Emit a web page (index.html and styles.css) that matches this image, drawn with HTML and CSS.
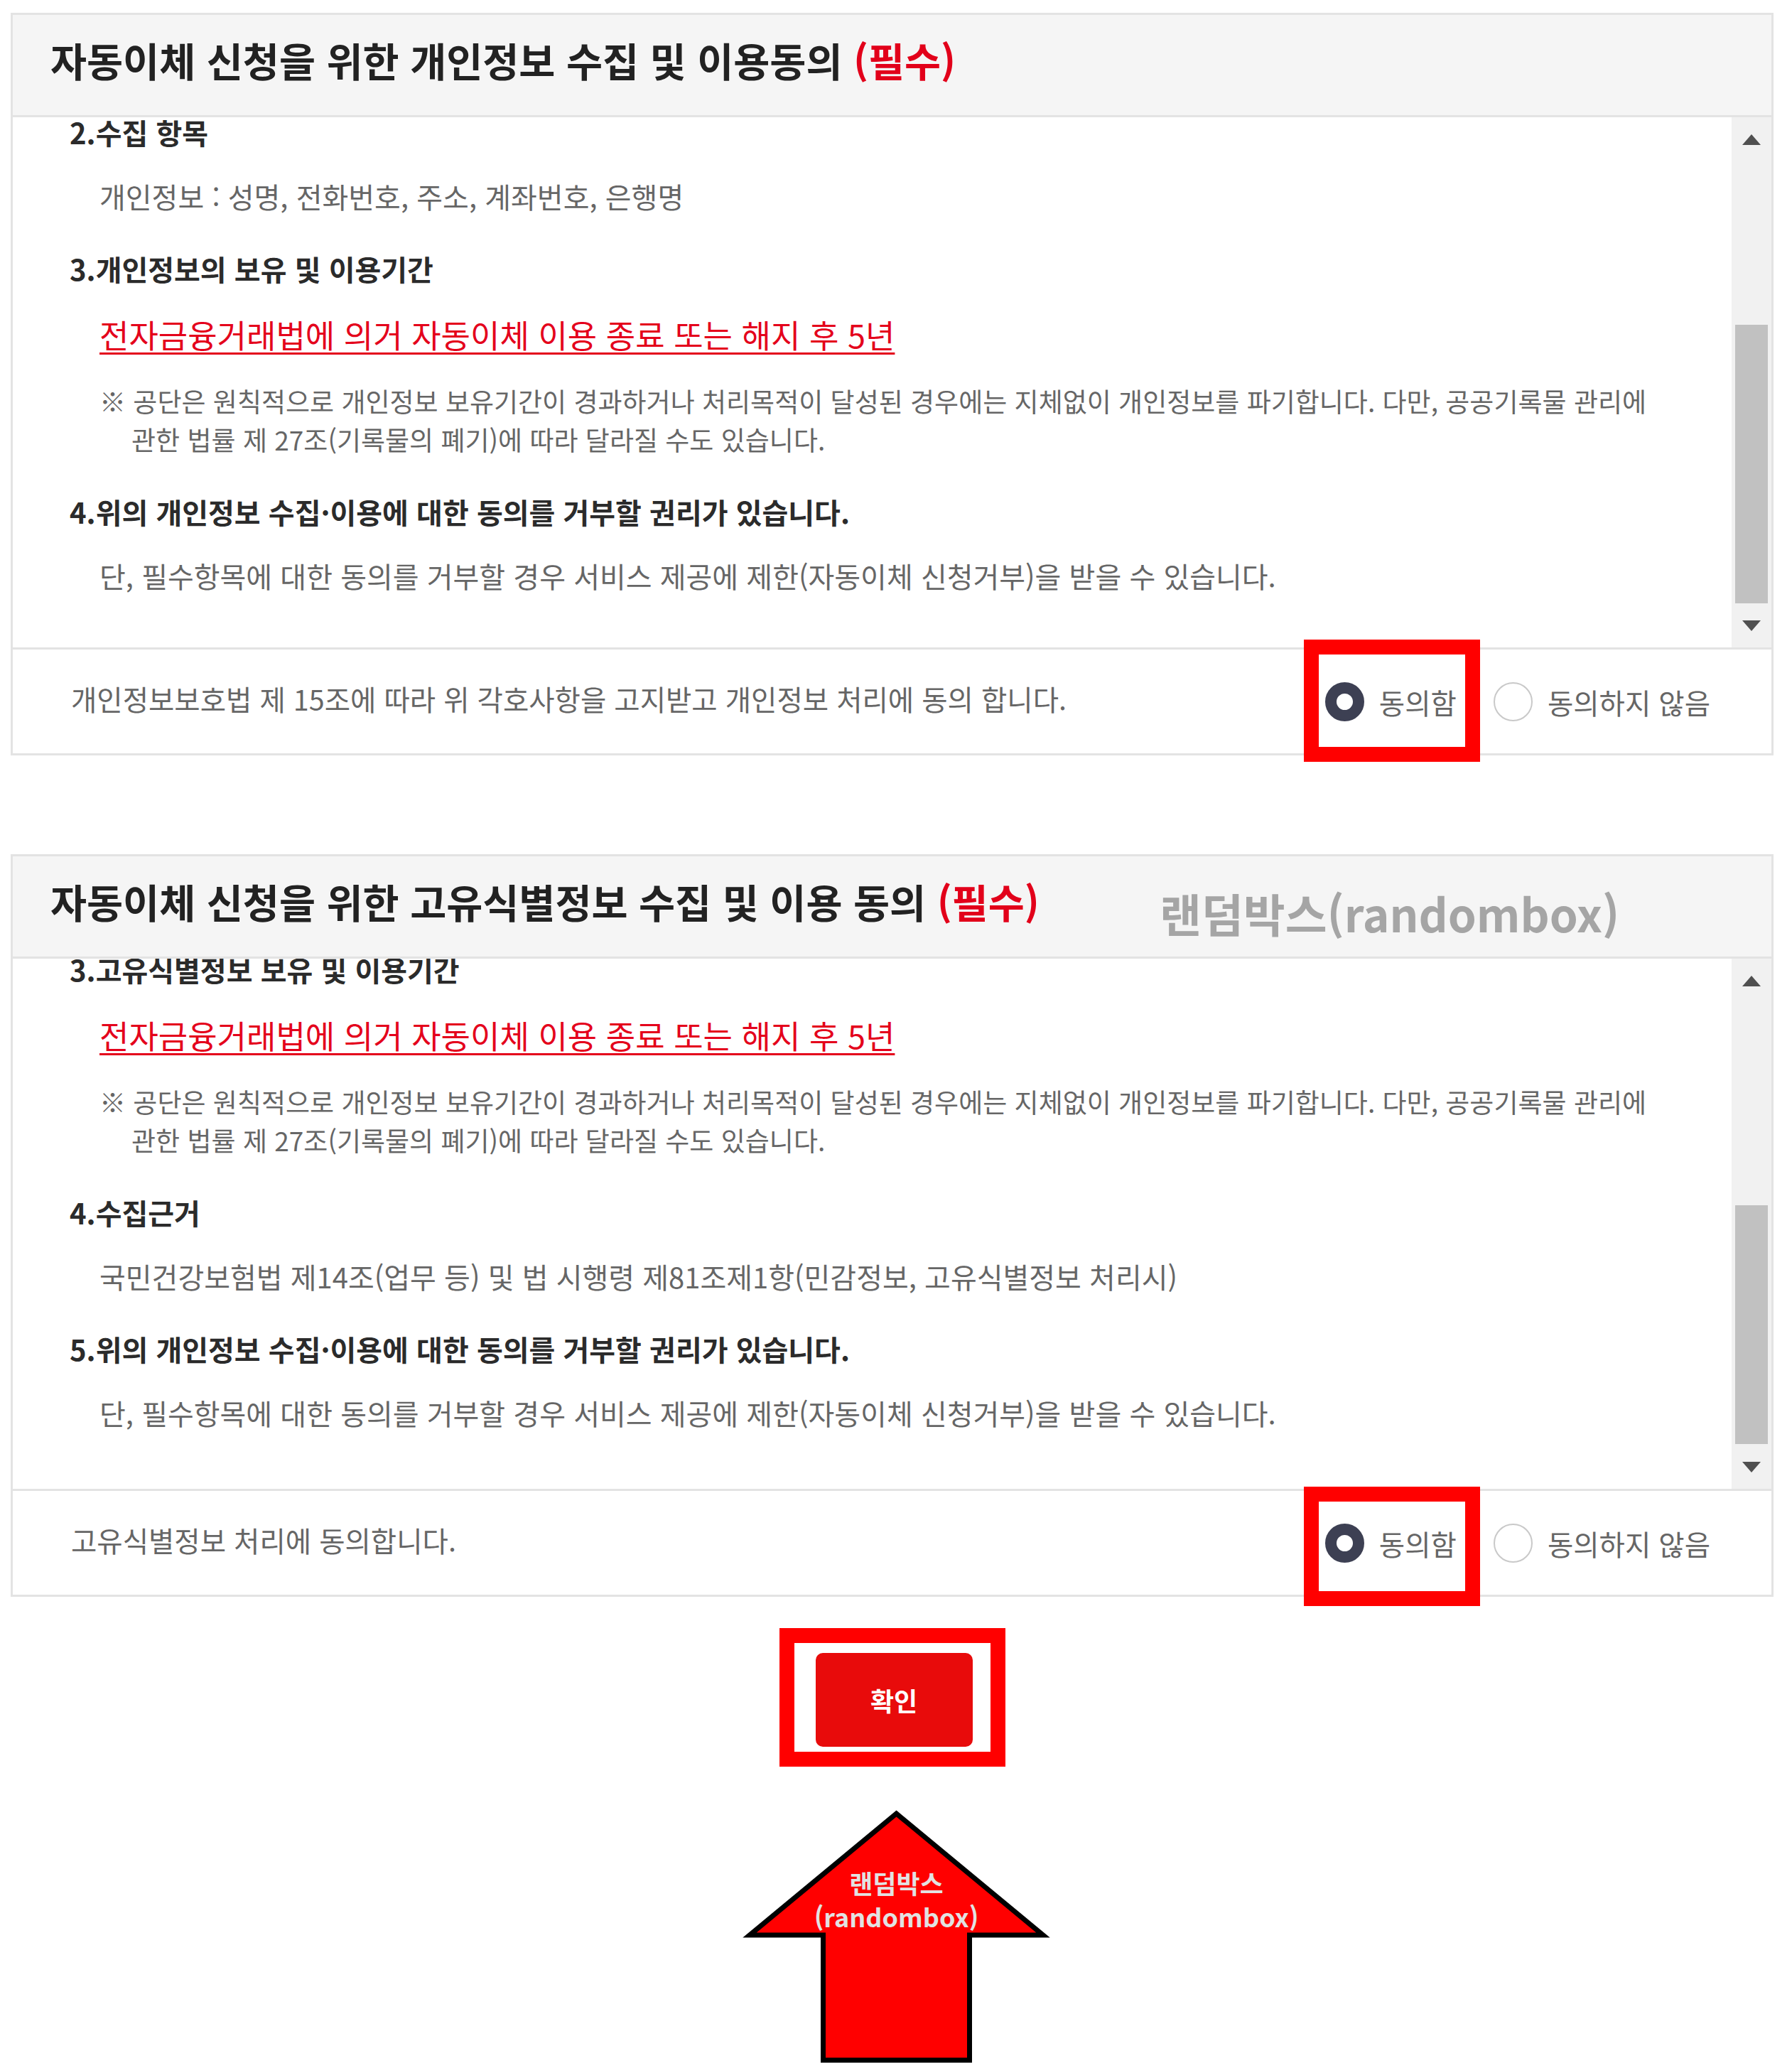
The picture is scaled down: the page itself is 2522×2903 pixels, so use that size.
FILE: index.html
```html
<!DOCTYPE html>
<html lang="ko">
<head>
<meta charset="utf-8">
<title>자동이체 신청 동의</title>
<link rel="stylesheet" href="styles.css">
</head>
<body>
<main class="page">
  <section class="panel">
    <header class="panel-head">
      <h2 class="panel-title">자동이체 신청을 위한 개인정보 수집 및 이용동의 <em class="req">(필수)</em></h2>
    </header>
    <div class="panel-body">
      <div class="terms">
        <div class="terms-inner">
          <div class="term">
            <h3 class="term-title lead-a">2.수집 항목</h3>
            <p class="term-text after-lead-a">개인정보 : 성명, 전화번호, 주소, 계좌번호, 은행명</p>
          </div>
          <div class="term">
            <h3 class="term-title">3.개인정보의 보유 및 이용기간</h3>
            <p class="term-link">전자금융거래법에 의거 자동이체 이용 종료 또는 해지 후 5년</p>
            <p class="term-text term-note">※ 공단은 원칙적으로 개인정보 보유기간이 경과하거나 처리목적이 달성된 경우에는 지체없이 개인정보를 파기합니다. 다만, 공공기록물 관리에<br>관한 법률 제 27조(기록물의 폐기)에 따라 달라질 수도 있습니다.</p>
          </div>
          <div class="term">
            <h3 class="term-title">4.위의 개인정보 수집·이용에 대한 동의를 거부할 권리가 있습니다.</h3>
            <p class="term-text">단, 필수항목에 대한 동의를 거부할 경우 서비스 제공에 제한(자동이체 신청거부)을 받을 수 있습니다.</p>
          </div>
        </div>
      </div>
      <div class="scrollbar">
        <span class="sb-btn sb-up"></span>
        <span class="sb-track"><span class="sb-thumb thumb-1"></span></span>
        <span class="sb-btn sb-down"></span>
      </div>
    </div>
    <div class="panel-foot">
      <p class="agree-text">개인정보보호법 제 15조에 따라 위 각호사항을 고지받고 개인정보 처리에 동의 합니다.</p>
      <div class="choices">
        <label class="choice"><span class="radio on"></span>동의함<span class="mark mark-1"></span></label>
        <label class="choice"><span class="radio"></span>동의하지 않음</label>
      </div>
    </div>
  </section>

  <section class="panel">
    <header class="panel-head">
      <h2 class="panel-title">자동이체 신청을 위한 고유식별정보 수집 및 이용 동의 <em class="req">(필수)</em></h2>
      <span class="watermark">랜덤박스(randombox)</span>
    </header>
    <div class="panel-body">
      <div class="terms">
        <div class="terms-inner">
          <div class="term">
            <h3 class="term-title lead-b">3.고유식별정보 보유 및 이용기간</h3>
            <p class="term-link after-lead-b">전자금융거래법에 의거 자동이체 이용 종료 또는 해지 후 5년</p>
            <p class="term-text term-note">※ 공단은 원칙적으로 개인정보 보유기간이 경과하거나 처리목적이 달성된 경우에는 지체없이 개인정보를 파기합니다. 다만, 공공기록물 관리에<br>관한 법률 제 27조(기록물의 폐기)에 따라 달라질 수도 있습니다.</p>
          </div>
          <div class="term">
            <h3 class="term-title">4.수집근거</h3>
            <p class="term-text">국민건강보험법 제14조(업무 등) 및 법 시행령 제81조제1항(민감정보, 고유식별정보 처리시)</p>
          </div>
          <div class="term">
            <h3 class="term-title">5.위의 개인정보 수집·이용에 대한 동의를 거부할 권리가 있습니다.</h3>
            <p class="term-text">단, 필수항목에 대한 동의를 거부할 경우 서비스 제공에 제한(자동이체 신청거부)을 받을 수 있습니다.</p>
          </div>
        </div>
      </div>
      <div class="scrollbar">
        <span class="sb-btn sb-up"></span>
        <span class="sb-track"><span class="sb-thumb thumb-2"></span></span>
        <span class="sb-btn sb-down"></span>
      </div>
    </div>
    <div class="panel-foot">
      <p class="agree-text">고유식별정보 처리에 동의합니다.</p>
      <div class="choices">
        <label class="choice"><span class="radio on"></span>동의함<span class="mark mark-2"></span></label>
        <label class="choice"><span class="radio"></span>동의하지 않음</label>
      </div>
    </div>
  </section>

  <div class="confirm">
    <div class="confirm-mark"><button class="btn-confirm" type="button">확인</button></div>
  </div>

  <div class="arrow-wrap">
    <svg class="arrow" viewBox="0 0 460 363" width="460" height="363" aria-hidden="true">
      <polygon points="235.5,12 442,183 338.5,183 338.5,359 132.5,359 132.5,183 29,183" fill="#ff0000" stroke="#000" stroke-width="7" stroke-linejoin="miter" stroke-miterlimit="4"/>
      <text class="arrow-label" x="235.5" y="125" text-anchor="middle">랜덤박스</text>
      <text class="arrow-label" x="235.5" y="172" text-anchor="middle">(randombox)</text>
    </svg>
  </div>
</main>
</body>
</html>
```
FILE: styles.css
```css
* { box-sizing: border-box; }

html, body { margin: 0; padding: 0; }
html { overflow: hidden; }

body {
  background: #ffffff;
  font-family: "Noto Sans CJK KR", "Noto Sans", sans-serif;
  color: #333333;
}

.page {
  width: 2481px;
  margin-left: 15px;
  padding-top: 18px;
}

.panel {
  border: 3px solid #e3e3e3;
  background: #ffffff;
}

.panel + .panel { margin-top: 139px; }

.panel-head {
  position: relative;
  height: 144px;
  background: #f5f5f5;
  border-bottom: 3px solid #e3e3e3;
  display: flex;
  align-items: center;
  padding: 0 0 14px 53px;
}

.panel-title {
  margin: 0;
  font-size: 55.5px;
  line-height: 1;
  font-weight: 700;
  color: #222222;
}

.req {
  font-style: normal;
  color: #e2001a;
}

.watermark {
  position: absolute;
  left: 1614px;
  top: 47px;
  font-size: 64px;
  line-height: 64px;
  font-weight: 700;
  color: #a5a5a5;
  white-space: nowrap;
}

.panel-body {
  display: flex;
  height: 746px;
}

.terms {
  flex: 1;
  overflow: hidden;
  padding-left: 80px;
}

.term + .term { margin-top: 48px; }

.term-title {
  margin: 0;
  font-size: 40px;
  line-height: 54px;
  font-weight: 700;
  color: #2b2b2b;
  white-space: nowrap;
}

/* first visible heading, partly scrolled under the top edge */
.term-title.lead-a { line-height: 40px; margin-top: 1px; }
.term-title.lead-b { line-height: 30px; }

.term-text {
  margin: 36px 0 0 42px;
  font-size: 40px;
  line-height: 54px;
  color: #666666;
  white-space: nowrap;
}

.term-text.after-lead-a { margin-top: 43px; }

.term-link {
  margin: 39px 0 0 42px;
  font-size: 45px;
  line-height: 54px;
  color: #e4001b;
  text-decoration: underline;
  text-decoration-thickness: 3px;
  text-underline-offset: 6px;
  white-space: nowrap;
}

.term-link.after-lead-b { margin-top: 51px; }

.term-note {
  margin-top: 39px;
  padding-left: 45px;
  text-indent: -45px;
  font-size: 37px;
}

.scrollbar {
  width: 56px;
  background: #f1f1f1;
  display: flex;
  flex-direction: column;
}

.sb-btn {
  height: 62px;
  display: flex;
  align-items: center;
  justify-content: center;
}

.sb-btn::before {
  content: "";
  border-left: 13px solid transparent;
  border-right: 13px solid transparent;
}

.sb-up::before { border-bottom: 15px solid #505050; }
.sb-down::before { border-top: 15px solid #505050; }

.sb-track {
  flex: 1;
  padding: 0 5px;
}

.sb-thumb {
  display: block;
  background: #c1c1c1;
}

.thumb-1 { margin-top: 230px; height: 392px; }
.thumb-2 { margin-top: 285px; height: 336px; }

.panel-foot {
  height: 149px;
  border-top: 3px solid #e3e3e3;
  display: flex;
  align-items: center;
  justify-content: space-between;
  padding: 0 86px 0 82px;
}

.agree-text {
  margin: 0 0 10px;
  font-size: 39.5px;
  color: #666666;
  white-space: nowrap;
}

.choices {
  display: flex;
  gap: 52px;
}

.choice {
  position: relative;
  display: flex;
  align-items: center;
  gap: 21px;
  height: 56px;
  font-size: 39.5px;
  color: #666666;
  white-space: nowrap;
}

.radio {
  width: 55px;
  height: 55px;
  border-radius: 50%;
  border: 2px solid #c9c9c9;
  background: #ffffff;
}

.radio.on { border: 16px solid #3d4053; }

.mark {
  position: absolute;
  left: -30px;
  right: -33px;
  border: 21px solid #ff0000;
}

.mark-1 { top: -59px; bottom: -57px; }
.mark-2 { top: -51px; bottom: -61px; }

.confirm {
  display: flex;
  justify-content: center;
  margin-top: 44px;
}

.confirm-mark {
  border: 21px solid #ff0000;
  padding: 14px 25px 7px 30px;
}

.btn-confirm {
  display: block;
  width: 221px;
  height: 132px;
  border: 0;
  border-radius: 10px;
  background: #e80b0b;
  color: #ffffff;
  font-family: "Noto Sans CJK KR", "Noto Sans", sans-serif;
  font-size: 36px;
  font-weight: 700;
}

.arrow-wrap {
  display: flex;
  justify-content: center;
  margin-top: 54px;
}

.arrow {
  display: block;
  width: 460px;
  height: 363px;
}

.arrow-label {
  font-family: "Noto Sans CJK KR", "Noto Sans", sans-serif;
  font-size: 36px;
  font-weight: 700;
  fill: #e2e2e2;
}
```
